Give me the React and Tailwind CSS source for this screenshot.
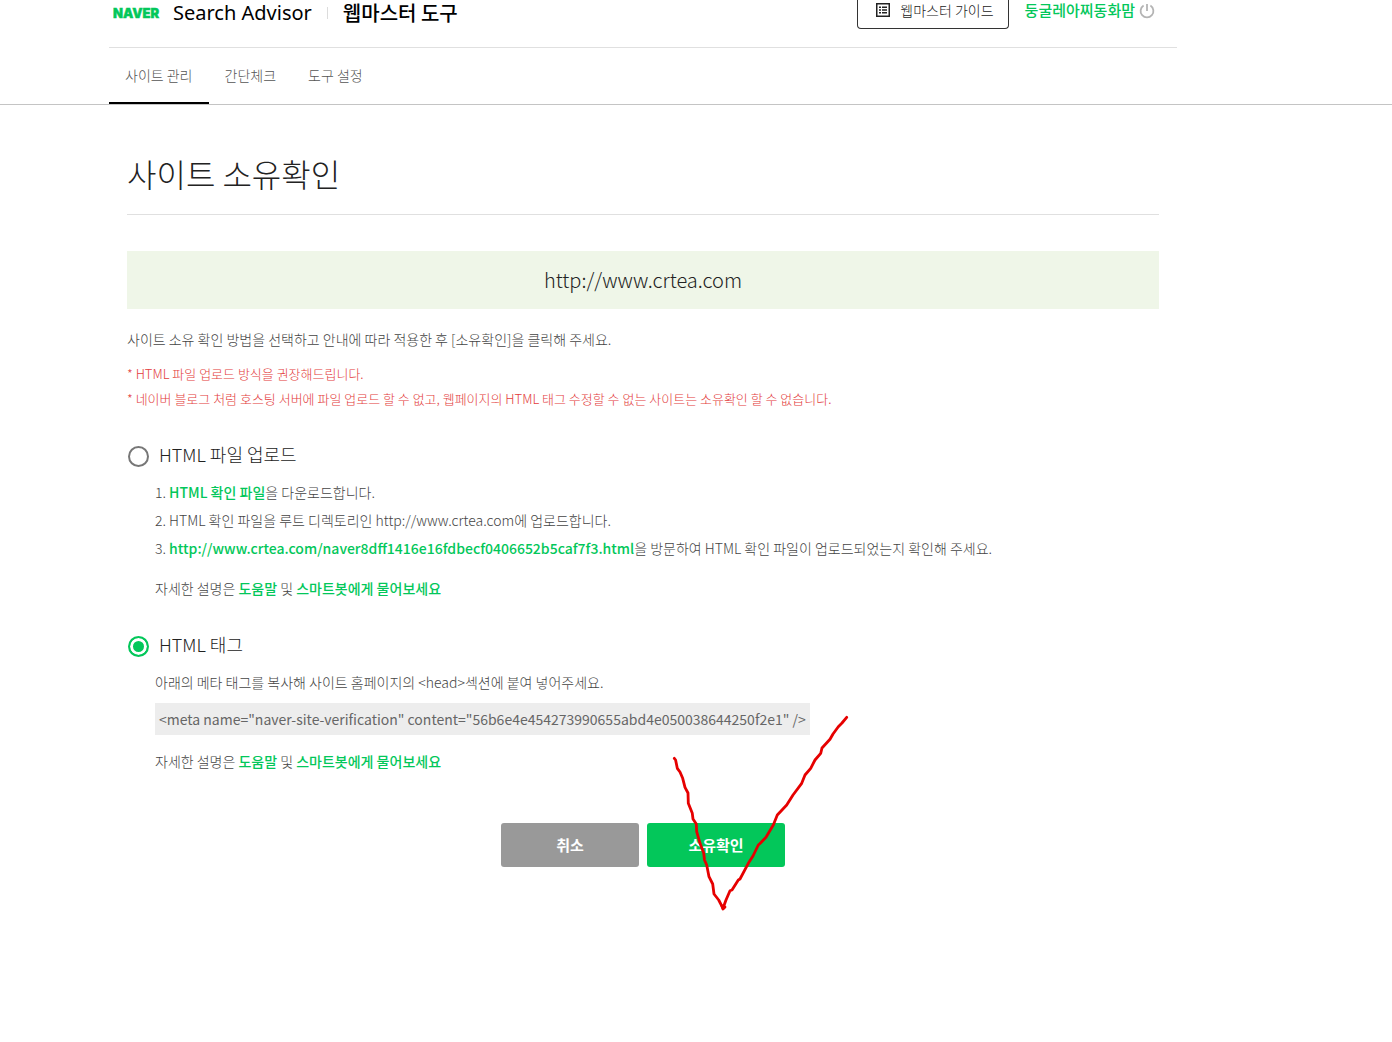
import { useState } from 'react';

const TABS = ['사이트 관리', '간단체크', '도구 설정'];

const SITE_URL = 'http://www.crtea.com';
const CHECK_FILE_URL = 'http://www.crtea.com/naver8dff1416e16fdbecf0406652b5caf7f3.html';
const META_TAG = '<meta name="naver-site-verification" content="56b6e4e454273990655abd4e050038644250f2e1" />';

function GreenLink({ children }) {
  return (
    <a href="#" className="font-medium text-[#03c75a]">
      {children}
    </a>
  );
}

function GuideIcon() {
  return (
    <svg width="14" height="14" viewBox="0 0 14 14" fill="none" stroke="#222" aria-hidden="true">
      <rect x="0.75" y="0.75" width="12.5" height="12.5" strokeWidth="1.5" />
      <path d="M3 4.2h2M6 4.2h5M3 7h2M6 7h5M3 9.8h2M6 9.8h5" strokeWidth="1.4" />
    </svg>
  );
}

function PowerIcon() {
  return (
    <svg width="16" height="16" viewBox="0 0 16 16" fill="none" stroke="#b4b4b4" strokeWidth="1.8" aria-hidden="true">
      <path d="M8 1v7" />
      <path d="M4.6 2.6a6.4 6.4 0 1 0 6.8 0" />
    </svg>
  );
}

function Header() {
  return (
    <header className="border-b border-[#c4c4c4]">
      <div className="ml-[109px] max-w-[1068px]">
        <div className="flex h-12 items-start justify-between border-b border-[#e0e0e0]">
          <div className="flex h-[26px] items-center pl-1">
            <svg width="48" height="28" viewBox="0 0 48 28" role="img" aria-label="NAVER">
              <text
                x="0"
                y="19"
                fill="#03c75a"
                stroke="#03c75a"
                strokeWidth="0.4"
                fontFamily="Inter"
                fontSize="13"
                fontWeight="900"
              >
                NAVER
              </text>
            </svg>
            <span className="ml-3 font-['Noto_Sans','Noto_Sans_CJK_KR',sans-serif] text-xl text-black">
              Search Advisor
            </span>
            <span className="mx-[15px] h-3 w-px bg-[#dcdcdc]" />
            <span className="text-xl font-medium text-black">웹마스터 도구</span>
          </div>
          <div className="flex items-start pr-[22px]">
            <button
              type="button"
              className="flex h-[29px] items-center gap-2.5 rounded-b border border-t-0 border-[#333] pr-3.5 pl-[18px] pb-2 text-sm font-light text-[#222]"
            >
              <GuideIcon />
              웹마스터 가이드
            </button>
            <a href="#" className="ml-4 text-[15px] leading-5 font-medium text-[#03c75a]">
              둥굴레아찌동화맘
            </a>
            <button type="button" aria-label="로그아웃" className="ml-1 flex h-[21px] items-center">
              <PowerIcon />
            </button>
          </div>
        </div>
        <nav className="flex">
          {TABS.map((tab, i) => (
            <a
              key={tab}
              href="#"
              className={`h-14 border-b-2 px-4 text-sm leading-[54px] font-light text-[#555] ${
                i === 0 ? 'border-black' : 'border-transparent'
              }`}
            >
              {tab}
            </a>
          ))}
        </nav>
      </div>
    </header>
  );
}

function MethodOption({ value, label, checked, onSelect, children }) {
  return (
    <section>
      <label className="flex h-7 items-center gap-2.5 text-lg font-light text-[#222]">
        <input
          type="radio"
          name="method"
          value={value}
          checked={checked}
          onChange={() => onSelect(value)}
          className="ml-px size-[21px] appearance-none rounded-full border-2 border-[#777] bg-white checked:border-[#03c75a] checked:bg-[#03c75a] checked:shadow-[inset_0_0_0_3px_white]"
        />
        <span className="pb-1">{label}</span>
      </label>
      <div className="pt-2 pl-7">{children}</div>
    </section>
  );
}

function MoreHelp() {
  return (
    <p className="mt-3">
      자세한 설명은 <GreenLink>도움말</GreenLink> 및 <GreenLink>스마트봇에게 물어보세요</GreenLink>
    </p>
  );
}

// hand-drawn check mark lying over the buttons
function PenMark() {
  return (
    <svg
      className="pointer-events-none absolute -top-[107px] left-[170px] overflow-visible"
      width="180"
      height="196"
      viewBox="0 0 180 196"
      fill="none"
      stroke="#e60000"
      strokeWidth="2.8"
      strokeLinecap="round"
      strokeLinejoin="round"
      aria-hidden="true"
    >
      <path d="M3.3 42.3L4.6 44L6.3 52.3L9 56L11.7 62.3L14 71.3L17 77L17.3 87.3L21.3 97.3L22 103L25.3 108L25.7 115.7L29 127.3L32.7 137L33.5 144L35.7 149L38 160.7L41.7 168L43 178L47.7 184L52 192.3L55 184L59 174.7L61 174L67.3 164L69 163L77.3 147.3L82 140L87.3 129L89 127.5L95 121.3L102.3 109L106.3 99L115.7 89L122 79L130.7 67.3L134 59L139.7 52.3L144 44L149.7 37.3L151 32L159 23.3L162 18L167.3 10.7L171 7L175.7 1.3" />
      <path d="M51 190l1 3 2-2" />
    </svg>
  );
}

export default function App() {
  const [method, setMethod] = useState('tag');

  return (
    <div className="min-h-screen bg-white font-['Noto_Sans_CJK_KR',sans-serif] text-[#444]">
      <Header />
      <main className="ml-[109px] max-w-[1068px] px-[18px] pt-[43px]">
        <h1 className="border-b border-[#e0e0e0] pb-4 text-[32px] leading-[50px] font-light text-[#222]">
          사이트 소유확인
        </h1>
        <p className="mt-9 bg-[#eff6e8] text-center text-xl leading-[58px] font-light text-[#222]">
          {SITE_URL}
        </p>

        <p className="mt-4 text-sm leading-7 font-light">
          사이트 소유 확인 방법을 선택하고 안내에 따라 적용한 후 [소유확인]을 클릭해 주세요.
        </p>
        <div className="mt-2 text-[13px] leading-[25px] font-light text-[#e33c3c]">
          <p>* HTML 파일 업로드 방식을 권장해드립니다.</p>
          <p>* 네이버 블로그 처럼 호스팅 서버에 파일 업로드 할 수 없고, 웹페이지의 HTML 태그 수정할 수 없는 사이트는 소유확인 할 수 없습니다.</p>
        </div>

        <div className="mt-[31px] flex flex-col gap-[30px] text-sm leading-7 font-light">
          <MethodOption value="file" label="HTML 파일 업로드" checked={method === 'file'} onSelect={setMethod}>
            <ol>
              <li>
                1. <GreenLink>HTML 확인 파일</GreenLink>을 다운로드합니다.
              </li>
              <li>2. HTML 확인 파일을 루트 디렉토리인 {SITE_URL}에 업로드합니다.</li>
              <li>
                3. <GreenLink>{CHECK_FILE_URL}</GreenLink>을 방문하여 HTML 확인 파일이 업로드되었는지 확인해 주세요.
              </li>
            </ol>
            <MoreHelp />
          </MethodOption>
          <MethodOption value="tag" label="HTML 태그" checked={method === 'tag'} onSelect={setMethod}>
            <p>아래의 메타 태그를 복사해 사이트 홈페이지의 &lt;head&gt;섹션에 붙여 넣어주세요.</p>
            <p className="mt-[7px] w-fit bg-[#ededed] px-1 leading-8 font-normal text-[#666]">{META_TAG}</p>
            <MoreHelp />
          </MethodOption>
        </div>

        <div className="relative mx-auto mt-12 flex w-fit gap-2 text-[15px] font-bold text-white">
          <button type="button" className="h-11 w-[138px] rounded-[3px] bg-[#999]">
            취소
          </button>
          <button type="button" className="h-11 w-[138px] rounded-[3px] bg-[#03c75a]">
            소유확인
          </button>
          <PenMark />
        </div>
      </main>
    </div>
  );
}
